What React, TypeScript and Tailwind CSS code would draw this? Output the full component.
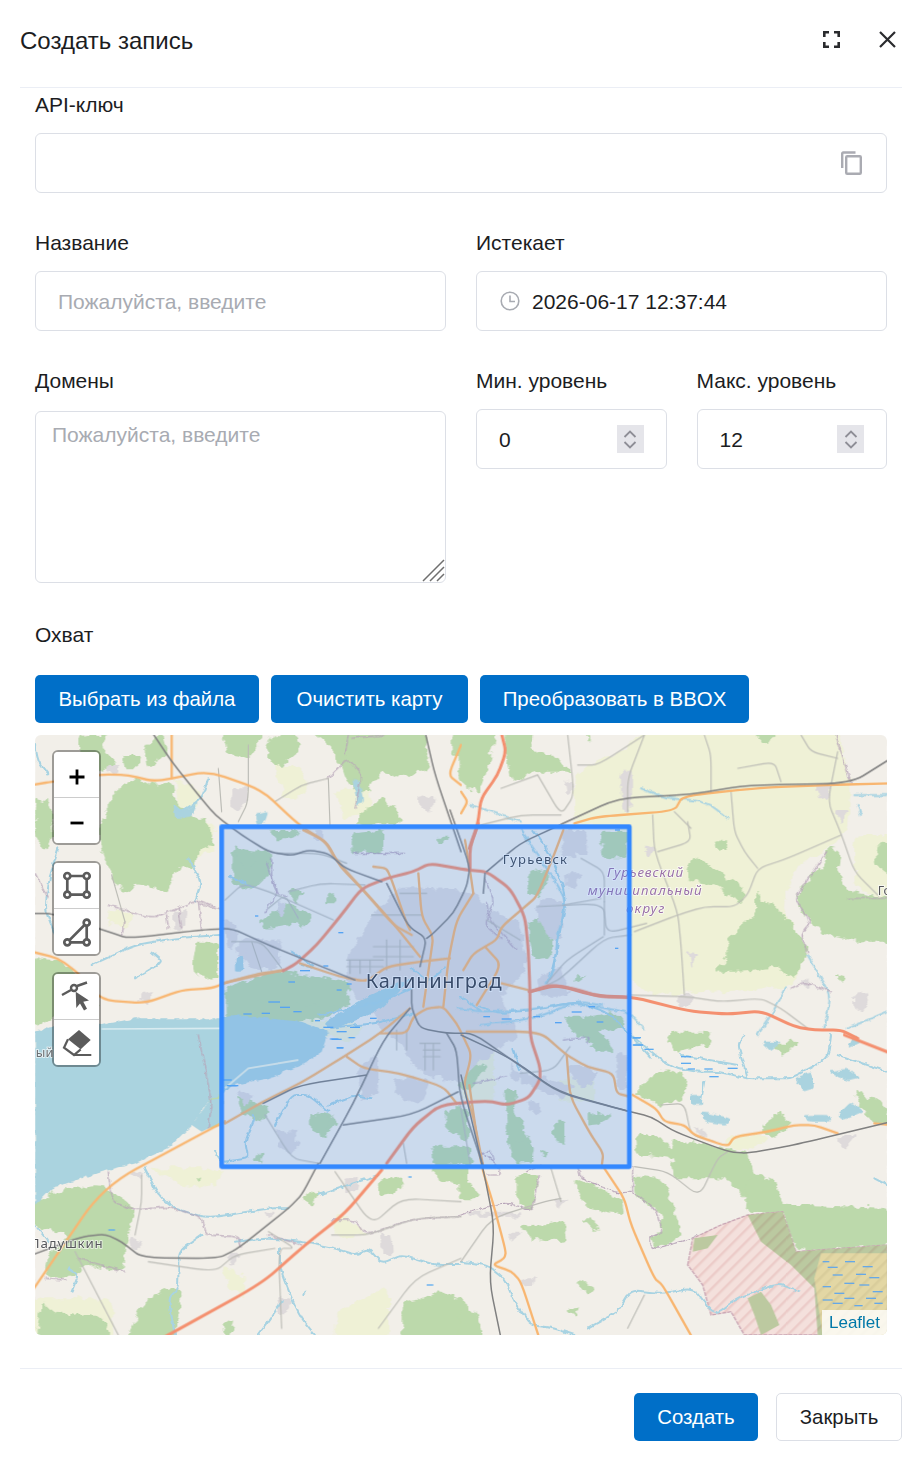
import React from "react";

type Space = {
  t: string;
  light?: string[];
  forest?: string[];
  urban?: string[];
  water?: string[];
  river?: string[];
  minor?: string[];
  boundary?: string[];
  orange?: string[];
  red?: string[];
  rail?: string[];
  dash?: string[];
};

const spaces: Space[] = [
  {
    t: "translate(0,0)",
    light: [
      "420,130 500,170 480,220 430,220",
      "460,270 540,260 540,340 480,370",
      "220,520 300,530 280,580 220,570",
      "900,170 1000,150 1010,240 930,250",
      "720,90 800,90 820,180 750,190",
    ],
    forest: [
      "240,170 300,130 360,150 410,140 420,200 470,240 520,260 545,330 490,345 480,395 430,400 400,470 310,445 280,480 240,440 200,350 190,280",
      "130,0 220,0 200,40 240,90 190,115 130,105",
      "0,190 40,200 60,290 30,350 0,300",
      "820,-20 1165,-20 1190,100 1090,130 1040,110 990,175 930,140 900,50",
      "970,240 1040,190 1090,230 1100,268 970,268",
      "690,20 770,-20 800,40 730,100 700,70",
      "-20,670 80,680 130,720 190,800 150,840 60,850 -20,880",
      "480,620 550,620 550,720 500,730 470,700",
      "330,40 380,-10 400,60 340,100",
      "260,60 320,60 310,100 270,100",
      "560,-10 690,-10 640,70 580,60",
      "1250,-10 1290,-10 1290,60 1250,60",
      "590,340 700,350 710,420 640,470 590,440",
      "950,310 1030,290 1030,350 950,355",
      "575,770 740,720 960,790 880,850 700,870 575,850",
      "780,500 800,560 700,580 660,560",
    ],
    urban: [
      "590,160 650,160 620,230 585,220",
      "220,90 250,90 250,110 220,110",
      "1150,180 1210,190 1180,230 1150,210",
      "415,530 460,530 440,590 415,590",
      "730,500 760,510 740,550 720,530",
      "310,780 360,770 350,800 310,800",
      "620,610 660,640 640,690 600,650",
    ],
    water: [
      "415,210 440,230 490,200 470,245 420,250",
      "955,130 975,140 985,200 965,210",
      "660,240 700,230 690,260 665,270",
      "600,680 625,690 620,710 600,710",
    ],
    river: [
      "0,30 10,80 40,120",
      "70,340 45,420 30,520 60,600",
      "520,130 500,190 440,230 415,210",
      "460,370 500,440 480,500",
      "170,690 300,630 420,610 555,600",
      "350,650 385,680 300,730",
      "770,650 840,700 800,690",
      "1130,700 1180,740 1230,700",
      "850,840 1040,800 1130,760",
    ],
    minor: [
      "550,100 560,230",
      "640,30 640,200 610,260",
      "720,200 800,150 880,130",
      "880,130 885,270",
      "230,420 270,560",
      "650,620 680,710",
      "1010,540 1100,540 1160,540",
      "760,470 860,445 990,450",
      "700,520 750,480 790,550",
      "590,620 680,620 740,700",
    ],
    boundary: [
      "220,510 350,550 430,520 490,495 540,515",
      "880,130 940,70 980,120 960,220",
      "940,0 930,60",
      "490,495 500,590",
      "1050,0 950,10",
      "710,370 710,430 730,470 690,530",
      "0,415 40,490",
      "270,560 260,600",
      "395,540 400,580",
      "430,520 440,580",
    ],
    orange: [
      "-10,150 50,140 200,118 280,120 360,140 520,108 680,165 790,268 870,320 900,370 980,460 1075,570 1130,600",
      "410,0 410,130",
      "1278,30 1240,120 1278,150",
      "-10,650 70,670 130,715 200,795 330,805 440,765 530,760 580,740 745,705",
    ],
    rail: [
      "350,-10 410,80 490,180 540,240 620,300 700,350 770,362 820,345 880,355 930,400 1040,440",
      "-10,535 50,535 220,590 280,610 500,585 590,580 700,630 960,735",
      "1170,-10 1200,120 1278,350",
    ],
  },
  {
    t: "translate(1278,0)",
    light: [
      "340,110 500,40 560,-30 1120,-30 1170,140 1160,300 1000,400 960,520 1040,640 1000,760 500,780 505,280 340,268",
      "1180,300 1300,300 1300,500 1180,460",
    ],
    forest: [
      "-10,-20 110,-20 80,100 50,180 -10,130",
      "130,-20 220,-20 210,40 290,70 340,110 220,110 150,140",
      "860,-20 960,-20 920,30",
      "700,360 770,410 860,470 830,510 780,450 690,440 680,410",
      "880,470 960,530 1030,620 1040,650 1000,740 950,700 850,710 760,710 800,670 800,610 880,540",
      "1100,340 1140,350 1130,400 1160,470 1300,490 1300,620 1200,620 1090,600 1050,560 1000,490 1050,420 1090,390",
      "1245,330 1300,320 1300,430 1245,390",
      "765,315 800,320 795,345 765,345",
      "415,290 500,290 500,370 430,370",
      "200,410 270,400 240,490 200,470",
      "200,550 280,570 230,680",
      "345,720 375,720 340,745",
      "350,850 480,830 490,880 350,890",
      "1115,730 1150,720 1140,745",
      "370,-10 390,-10 385,20",
    ],
    urban: [
      "480,110 510,110 510,230 480,230",
      "545,330 585,340 570,370",
      "650,780 700,780 690,810 650,810",
      "310,130 340,160 320,190",
      "1070,150 1120,155 1100,190 1070,190",
      "1120,225 1160,225 1140,260",
      "680,650 710,660 690,700",
      "1020,740 1060,740 1040,760",
      "1180,780 1230,770 1210,830 1180,820",
      "300,290 345,290 340,370 300,370",
      "235,490 300,500 290,555 230,540",
    ],
    river: [
      "540,160 620,190 700,195 750,210 800,250",
      "180,285 320,495 290,600 280,700 250,745",
      "1180,180 1278,180",
      "-10,820 60,830 200,825 330,805 500,830 550,880",
      "975,760 930,840 890,900",
      "1040,660 1110,780 1090,880",
      "1160,880 1278,830",
      "1190,210 1200,240",
      "30,210 120,240 180,260",
      "60,870 220,850 350,800 420,810",
    ],
    minor: [
      "520,590 650,540 730,515 820,515 860,480 890,400 980,370 1140,300",
      "575,240 580,350 650,530 660,630 670,780",
      "500,780 680,785 780,800 900,790 960,820 1040,880",
      "550,0 500,130 500,230",
      "230,120 300,240 340,180 320,0",
      "1130,50 1100,200 1140,295 1180,410 1250,480",
      "810,170 820,290 850,350 890,400",
      "350,90 410,90 550,0",
      "830,100 940,80 960,140",
      "1020,0 1050,50 1130,70",
      "730,0 750,60 750,170",
      "680,260 690,320 590,350",
      "640,230 690,280",
      "120,160 230,120",
      "60,270 180,240 300,240",
      "510,600 430,610 300,730 260,750",
      "430,500 430,600",
      "310,510 420,490",
      "360,370 430,410 430,500",
    ],
    boundary: [
      "1125,0 1170,145",
      "1100,350 1050,420 1000,490 1050,560 1020,600 1040,650",
      "1160,490 1278,490",
      "990,760 1030,740 1110,770",
      "70,430 100,500 70,570 120,610",
    ],
    orange: [
      "340,265 410,245 640,228 665,183 900,158 1100,150 1290,145",
      "0,170 20,200 0,235",
    ],
    red: [
      "120,-10 135,50 110,120 60,190 50,270 25,340",
      "205,770 290,750 400,782 520,787 680,828 800,838 900,828 1000,875 1060,885 1140,885 1190,910",
    ],
    rail: [
      "300,268 470,190 690,178 860,150 1170,145 1290,70",
    ],
  },
  {
    t: "translate(0,900)",
    light: [
      "340,400 560,400 560,440 460,460",
      "900,530 980,580 1000,600 900,610",
      "900,840 1060,750 1060,920 900,920",
      "-20,790 230,790 240,920 -20,920",
      "560,690 630,720 630,790 580,760",
    ],
    forest: [
      "-20,510 60,470 200,450 300,525 270,640 270,710 150,690 100,730 30,720 40,660 60,640 100,600 -20,570",
      "320,810 400,760 440,770 420,920 270,920",
      "1100,800 1160,790 1220,770 1300,800 1300,920 1100,920",
      "560,860 600,850 580,920",
      "1030,440 1100,420 1100,460 1040,490",
      "20,800 60,840 200,840 230,920 0,920",
      "520,190 560,170 560,280 525,280",
      "820,260 880,230 910,270 860,310",
      "1200,340 1300,330 1300,388 1200,388",
      "1230,220 1300,220 1300,320 1230,280",
      "790,490 850,460 830,510",
      "600,180 690,210 700,260 620,240",
      "1200,380 1300,400 1300,460 1200,430",
      "650,370 690,350 680,390",
      "480,420 500,425 490,440",
    ],
    urban: [
      "1040,600 1065,600 1075,660 1050,660",
      "690,530 725,530 700,555",
      "570,665 620,660 590,695",
      "280,610 330,620 300,650",
      "720,790 770,790 760,835 730,835",
      "930,430 970,430 960,470 930,470",
      "280,410 320,410 310,430",
      "730,290 760,290 740,320",
      "770,280 790,290 770,320",
      "760,320 800,320 770,360",
      "970,100 1030,60 1030,170 980,200",
      "1080,130 1190,130 1160,210 1080,180",
      "600,160 660,180 630,220",
    ],
    river: [
      "330,400 370,480 420,520 520,550 700,520 760,520",
      "850,480 1030,420",
      "500,600 430,650 430,760 400,790 420,900",
      "600,620 700,610 800,620 900,640 960,660 1000,640 1040,685 1100,660 1200,690 1278,690",
      "735,640 735,700 770,790 800,850 840,900",
      "740,800 700,860 670,900",
      "100,700 130,720 110,770",
      "570,380 640,370 630,320 660,250 650,240",
      "720,270 770,180 820,180 880,230",
      "880,210 960,180 1010,190",
      "540,350 560,380",
      "0,570 40,620",
      "810,770 805,780",
    ],
    minor: [
      "320,420 320,500 300,600",
      "120,650 250,900",
      "900,410 1010,570 1100,490 1278,500",
      "700,590 780,640 730,640 740,880",
      "1030,880 1140,730 1278,670",
      "340,680 540,710 600,660 720,640",
      "690,240 770,370 850,385",
      "890,600 1000,600 1140,550 1278,545",
    ],
    boundary: [
      "490,0 530,200 520,280",
      "220,410 230,500 300,525 400,515 500,545 510,600 610,605 620,640",
      "890,555 960,555 990,600 1140,550 1278,545",
      "130,670 270,710",
      "30,730 90,735",
      "700,600 800,630",
    ],
    orange: ["-10,770 205,455 530,280 570,260"],
    red: ["1040,405 930,535 810,630 680,745 400,900 370,915"],
    rail: [
      "850,385 800,480 760,520 610,640 550,670 320,668 260,620 210,597 140,605 -10,660",
      "1270,170 1130,240 925,270",
    ],
    dash: [
      "560,135h30", "575,152h30", "220,585h20", "1175,750h20", "1120,426h10",
      "885,12h25", "940,8h20", "905,38h20",
    ],
  },
  {
    t: "translate(1278,900)",
    light: ["0,0 100,0 100,200 0,200", "300,130 400,130 400,200 300,200", "800,300 920,300 870,350 800,340"],
    forest: [
      "525,300 600,300 630,340 640,315 750,330 870,360 880,420 950,440 850,530 855,490 800,430 640,430 630,370 560,360 530,360",
      "560,130 620,100 680,130 660,200 590,210 520,180",
      "520,420 600,430 640,520 660,610 580,640 565,605 605,595 600,540 520,480",
      "-10,400 60,490 -10,490",
      "170,420 230,420 210,530 170,500",
      "330,420 480,490 490,540 380,520",
      "170,570 310,560 315,620 200,610",
      "340,740 410,750 380,785",
      "320,830 355,815 345,850",
      "-10,830 50,830 65,920 -10,920",
      "610,-10 760,-10 740,30 640,50",
      "900,270 950,230 1000,265 930,310",
      "1170,170 1250,190 1300,260 1230,260",
      "130,165 165,165 160,250 130,215",
      "130,265 180,320 220,330 210,385 160,385",
      "270,260 310,260 310,320 280,300",
      "380,230 430,260 380,270",
      "235,350 260,350 255,370",
      "360,550 400,550 410,600",
      "940,20 1010,20 960,70",
      "850,430 950,440 960,510 1050,510 1300,520 1300,630 1005,650 965,530 860,535",
      "380,30 440,10 460,50 400,50",
      "20,70 60,120 30,165 -10,160",
    ],
    urban: [
      "695,270 735,290 720,305",
      "130,590 180,590 160,625",
      "180,730 230,730 200,755",
      "1125,300 1190,300 1150,345",
      "270,490 320,490 290,525",
      "200,120 350,150 300,190 200,150",
      "320,90 390,90 390,140 330,130",
      "20,530 180,530 180,545 30,545",
      "-10,60 40,40 40,100 -10,90",
      "150,80 180,120 150,140",
    ],
    water: [
      "1000,130 1050,110 1060,160 1030,170",
      "1100,110 1160,100 1200,130 1160,140",
      "1130,240 1170,200 1210,230 1150,255",
      "1030,240 1100,240 1110,260 1040,260",
      "690,180 720,180 725,210 690,210",
      "720,230 810,250 800,270 730,260",
      "1180,0 1200,20 1160,40",
      "900,20 960,20 930,50",
    ],
    river: [
      "510,0 620,90 700,110 780,110 850,130 940,130 990,130 1100,70 1110,0",
      "860,130 830,30 850,0",
      "730,140 720,200",
      "1130,60 1278,110",
      "0,680 80,690 130,730 160,800 210,870 280,880 340,900",
      "380,880 470,830 510,765 600,775 700,760 760,840 830,790 950,745 1015,770",
      "1240,430 1278,450",
      "660,60 830,90",
    ],
    minor: [
      "520,395 620,410 715,485 770,370 800,350",
      "600,210 670,205 690,300 760,320",
      "0,680 90,550 250,500 300,490",
      "550,780 500,880",
      "270,400 300,500",
    ],
    boundary: [
      "350,395 360,430 470,475 515,470 590,530 605,595 565,605 575,645 690,610 710,600",
      "515,395 515,470",
      "0,540 130,500 215,530 235,420",
      "200,410 240,390",
      "75,420 120,420 110,390 60,350",
    ],
    orange: [
      "25,150 60,390 95,500 135,650 130,670 95,690 150,708 180,740 235,910",
      "430,400 490,490 510,570 580,730 605,750 695,910",
      "515,180 585,220 610,260 670,270 700,300 800,335 820,305 920,290 1000,270 1060,270 1130,295",
      "1240,265 1290,270",
    ],
    red: ["1150,0 1290,55"],
    rail: [
      "0,0 150,70 290,170 500,228 570,245 640,290 800,350 860,355 1000,330 1290,260",
      "0,120 65,395 100,570 85,740 120,910",
    ],
    dash: [
      "515,8h25", "515,30h30", "550,43h28", "660,65h30", "660,85h30", "680,102h22", "730,102h25", "800,100h30", "745,125h28",
    ],
  },
  {
    t: "translate(495,225)",
    urban: [
      "440,440 530,300 600,230 820,240 870,300 960,340 980,480 900,560 960,680 830,760 780,820 660,790 600,700 540,650 440,520",
      "1090,60 1160,60 1160,130 1090,130",
      "1000,290 1090,270 1080,390 1040,380",
      "340,60 370,60 370,90 340,90",
      "1010,500 1080,470 1110,560 1020,560",
      "1130,780 1190,780 1170,830 1130,820",
      "1100,190 1140,190 1130,230 1100,230",
      "980,880 1020,880 1010,920",
      "230,960 290,970 280,1030 230,1010",
      "130,380 250,400 230,480 140,470",
      "70,330 120,350 90,430",
      "1250,730 1280,730 1280,840 1250,840",
      "960,780 1020,810 960,830",
    ],
    forest: [
      "460,70 550,60 550,130 460,120",
      "100,100 180,150 130,180",
      "200,60 300,60 280,85 220,85",
      "75,530 240,480 460,520 420,590 200,580 75,580",
      "800,750 860,770 830,810",
      "910,840 950,840 945,900 1000,1010 920,980",
      "1060,935 1090,960 1095,1000 1060,990",
      "330,910 390,920 370,980 330,960",
      "700,260 750,270 700,310",
      "980,330 1060,330 1060,440 1000,450",
      "690,1010 760,1010 830,1060 700,1065",
      "1090,620 1170,620 1240,720 1130,680",
      "1180,910 1240,920 1190,945",
      "260,300 340,310 300,360",
      "390,240 410,280 380,280",
      "260,240 310,240 290,280",
      "710,80 750,80 720,100",
    ],
    light: [
      "260,625 500,640 440,705 380,665",
      "1000,330 1060,330 1030,400",
    ],
    water: [
      "370,640 500,560 640,500 600,540 540,600 400,660",
      "110,440 130,440 130,480 110,480",
    ],
    river: [
      "840,590 900,610 1000,600 1130,575 1230,610 1350,740",
      "1000,60 1050,130 1100,260 1060,470 1040,520",
      "640,610 530,640 420,650",
      "840,600 780,560",
      "940,720 960,780",
      "90,200 160,230",
    ],
    minor: [
      "75,270 130,220 220,250 400,330",
      "560,390 560,480",
      "600,390 600,480",
      "520,410 640,410",
      "520,440 640,440",
      "440,450 550,450",
      "440,470 550,470",
      "450,450 450,490",
      "480,450 480,490",
      "510,450 510,490",
      "590,660 590,720",
      "620,660 620,720",
      "660,700 720,700",
      "670,720 720,720",
      "670,740 720,740",
      "675,700 675,780",
      "700,700 700,780",
      "600,250 680,250",
      "860,330 960,390",
      "1010,290 1210,280 1220,370 1340,340",
      "1210,380 1100,450 1040,520",
      "1110,710 1060,780 960,790",
      "230,130 360,130 440,160",
      "780,880 810,1060",
      "610,1000 620,1060",
    ],
    boundary: [
      "200,160 230,250 260,260",
      "460,130 610,130",
      "860,280 870,330 950,420",
      "1090,690 1170,680 1160,700",
      "820,820 920,800",
      "840,1030 870,1020 880,1050",
      "0,280 60,300",
    ],
    orange: [
      "70,520 180,490 250,482",
      "300,460 420,500 500,515 560,470 660,455 750,445",
      "310,60 380,95 420,170 490,240 580,340 660,440",
      "520,170 560,175 575,210 620,340 630,360",
      "655,190 665,320 700,380 690,450 670,590",
      "820,250 770,330 745,450 730,590",
      "1090,60 1060,140 1010,260 975,290 905,350 890,390 820,430 790,480",
      "855,410 905,465 830,585",
      "905,520 985,540",
      "540,670 620,670 640,620 680,595 730,590 770,640 790,680 815,735 790,830 820,920 850,1070",
      "75,940 180,880 300,820 440,735 540,670 630,595",
      "440,740 490,775 600,790 730,830 770,880",
      "800,665 1020,665 1100,735 1160,770 1240,790 1250,850 1290,860",
      "1100,735 1110,860 1170,970 1210,1030 1205,1070",
      "795,90 810,180 820,250",
    ],
    red: [
      "250,482 290,460 350,405 420,320 485,235 560,205 640,185 690,160 800,180 860,185 930,235 975,320 985,420 990,545 990,680 1020,770 1020,810 985,865 920,885 860,872 720,885 640,950 560,1060",
      "990,545 1050,525 1120,535 1200,560 1290,562",
      "810,180 810,110 835,40",
    ],
    rail: [
      "560,220 625,350 680,385 660,470",
      "750,0 810,170 800,230 760,310 700,370 680,385",
      "860,185 960,100 1080,45",
      "635,540 635,595 660,655 740,670 820,670 950,760 1080,850 1290,905",
      "630,595 550,690 460,880 360,1060",
      "740,670 770,720 780,860 850,1070",
      "500,795 300,825 190,880",
      "855,190 850,250",
    ],
    dash: [
      "415,368h15", "370,468h15", "300,482h30", "265,516h20", "410,540h15", "440,522h15", "205,576h35", "240,592h30",
      "130,612h25", "185,610h25", "280,605h25", "345,632h15", "370,652h30", "410,665h30", "450,652h30", "510,625h20",
      "395,688h30", "410,714h20", "850,620h20", "905,627h30", "1000,620h20", "1065,638h20", "1115,606h30", "1190,636h20",
      "1165,590h20", "1300,684h20", "1300,705h30", "85,827h30", "1245,415h10", "165,318h10", "1245,60h15",
    ],
  },
];

function parse(p: string) {
  return p.split(" ").map((q) => q.split(",").map(Number));
}

// closed outline with rounded corners; the sides stay where they are
function blob(p: string) {
  const a = parse(p);
  const n = a.length;
  const share = 0.22;
  let d = "";
  a.forEach((pt, i) => {
    const prev = a[(i + n - 1) % n];
    const next = a[(i + 1) % n];
    const sx = pt[0] + (prev[0] - pt[0]) * share;
    const sy = pt[1] + (prev[1] - pt[1]) * share;
    const ex = pt[0] + (next[0] - pt[0]) * share;
    const ey = pt[1] + (next[1] - pt[1]) * share;
    d += `${i === 0 ? "M" : "L"}${sx},${sy}Q${pt[0]},${pt[1]} ${ex},${ey}`;
  });
  return d + "Z";
}

// open line rounded at its corners, the ends stay in place
function curve(p: string) {
  const a = parse(p);
  if (a.length < 3) return `M${a[0]}L${a[a.length - 1]}`;
  let d = `M${a[0][0]},${a[0][1]}`;
  const share = 0.3;
  for (let i = 1; i < a.length - 1; i++) {
    const [x0, y0] = a[i - 1];
    const [x, y] = a[i];
    const [x2, y2] = a[i + 1];
    d += `L${x + (x0 - x) * share},${y + (y0 - y) * share}`;
    d += `Q${x},${y} ${x + (x2 - x) * share},${y + (y2 - y) * share}`;
  }
  const e = a[a.length - 1];
  return d + `L${e[0]},${e[1]}`;
}

function Poly({ pts, fill }: { pts: string[] | undefined; fill: string }) {
  return (
    <>
      {(pts ?? []).map((p, i) => (
        <path key={i} d={blob(p)} fill={fill} />
      ))}
    </>
  );
}

function Lines({ pts, stroke, w, dash }: { pts: string[] | undefined; stroke: string; w: number; dash?: string }) {
  return (
    <>
      {(pts ?? []).map((p, i) => (
        <path
          key={i}
          d={curve(p)}
          fill="none"
          stroke={stroke}
          strokeWidth={w}
          strokeLinejoin="round"
          strokeLinecap="round"
          strokeDasharray={dash}
        />
      ))}
    </>
  );
}

function Layer({ render }: { render: (s: Space) => React.ReactNode }) {
  return (
    <>
      {spaces.map((s, i) => (
        <g key={i} transform={s.t}>
          {render(s)}
        </g>
      ))}
    </>
  );
}

const haloText = {
  paintOrder: "stroke",
} as React.CSSProperties;

function MapPicture() {
  return (
    <svg viewBox="0 0 2556 1800" className="block h-full w-full">
      <defs>
        <filter id="tile" x="0" y="0" width="100%" height="100%">
          <feGaussianBlur stdDeviation="1.6" />
        </filter>
        <filter id="rough" x="-5%" y="-5%" width="110%" height="110%" filterUnits="objectBoundingBox">
          <feTurbulence type="fractalNoise" baseFrequency="0.035" numOctaves="3" seed="4" result="n" />
          <feDisplacementMap in="SourceGraphic" in2="n" scale="30" xChannelSelector="R" yChannelSelector="G" />
        </filter>
        <filter id="wiggle" x="-5%" y="-5%" width="110%" height="110%">
          <feTurbulence type="fractalNoise" baseFrequency="0.05" numOctaves="2" seed="9" result="n" />
          <feDisplacementMap in="SourceGraphic" in2="n" scale="14" xChannelSelector="G" yChannelSelector="R" />
        </filter>
        <pattern id="hatchPink" width="26" height="26" patternUnits="userSpaceOnUse" patternTransform="rotate(-45)">
          <rect width="26" height="26" fill="#f4e0dc" />
          <rect width="26" height="7" fill="#eccbc8" />
        </pattern>
        <pattern id="hatchGreen" width="26" height="26" patternUnits="userSpaceOnUse" patternTransform="rotate(-45)">
          <rect width="26" height="26" fill="#bbc9a0" />
          <rect width="26" height="7" fill="#b6b795" />
        </pattern>
        <pattern id="hatchMarsh" width="26" height="26" patternUnits="userSpaceOnUse" patternTransform="rotate(-45)">
          <rect width="26" height="26" fill="#e3d7a4" />
          <rect width="26" height="7" fill="#d9cd9b" />
        </pattern>
      </defs>
      <g filter="url(#tile)">
        <rect width="2556" height="1800" fill="#f2efe9" />
        <g filter="url(#rough)">
          <rect width="2556" height="1800" fill="#f2efe9" />
          <Layer render={(s) => <Poly pts={s.light} fill="#eff1d6" />} />
          <Layer render={(s) => <Poly pts={s.forest} fill="#bcd9ab" />} />
          <Layer render={(s) => <Poly pts={s.urban} fill="#dedadb" />} />
        </g>
        {/* restricted area with hatching */}
        <g transform="translate(1278,900)">
          <polygon
            points="680,690 695,610 780,570 860,540 965,530 1005,650 1278,630 1278,900 850,900 810,830 750,840 725,750"
            fill="url(#hatchPink)"
            stroke="#c9a5b4"
            strokeWidth="4"
            strokeDasharray="12 3"
          />
          <polygon points="860,540 965,530 1005,650 1278,630 1278,900 1070,900 1060,760 990,690 900,620" fill="url(#hatchGreen)" />
          <polygon points="1080,655 1278,655 1278,900 1085,900 1060,730" fill="url(#hatchMarsh)" />
          <polygon points="700,610 770,600 740,640 695,650" fill="#bcc9a0" />
          <polygon points="860,790 900,770 930,810 955,870 900,900 880,840" fill="#bcc9a0" />
        </g>
        {/* the sea and the lagoon */}
        <polygon
          points="0,1410 50,1360 200,1310 300,1285 400,1240 470,1170 520,1100 600,1050 700,1030 800,990 860,950 880,890 800,860 700,850 600,840 560,850 400,850 300,850 200,870 100,860 0,890"
          fill="#aad3df"
          filter="url(#wiggle)"
        />
        <polyline points="200,882 560,880" fill="none" stroke="#d8ebf0" strokeWidth="5" />
        <polyline points="570,1060 640,1000 790,975" fill="none" stroke="#eaf1e4" strokeWidth="6" />
        <polygon points="470,1170 525,1095 560,1090 560,1160 500,1190" fill="#aad3df" />
        <g filter="url(#wiggle)">
          <Layer render={(s) => <Poly pts={s.water} fill="#aad3df" />} />
          <Layer render={(s) => <Lines pts={s.river} stroke="#a8d3e2" w={6} />} />
          <Layer render={(s) => <Lines pts={s.boundary} stroke="#b7a4b8" w={3.5} dash="14 4" />} />
        </g>
        <Layer render={(s) => <Lines pts={s.minor} stroke="#bcbcb6" w={3.5} />} />
        <Layer render={(s) => <Lines pts={s.orange} stroke="#f8b671" w={7} />} />
        <Layer render={(s) => <Lines pts={s.red} stroke="#f4906f" w={9} />} />
        <Layer render={(s) => <Lines pts={s.rail} stroke="#808080" w={4.5} />} />
        <g transform="translate(1278,900)">
          {[
            "1085,680h20", "1152,680h30", "1205,695h30", "1100,697h30", "1115,720h30", "1185,718h30", "1085,755h25",
            "1150,745h30", "1225,728h30", "1195,750h30", "1120,775h30", "1235,770h30", "1085,795h30", "1150,790h30", "1215,790h30",
            "1115,805h30", "1180,812h25", "1240,805h25",
          ].map((d, i) => (
            <path key={i} d={`M${d}`} stroke="#66a8e6" strokeWidth="4" fill="none" />
          ))}
        </g>
        <Layer
          render={(s) =>
            (s.dash ?? []).map((d, i) => <path key={i} d={`M${d}`} stroke="#5dabf0" strokeWidth="4" fill="none" />)
          }
        />
        <g fontFamily="'Noto Sans', 'Open Sans', sans-serif" stroke="#ffffff" strokeOpacity="0.75" strokeWidth="5" style={haloText}>
          <text x="992" y="760" fontSize="60" fill="#3a3d44" textLength="408">
            Калининград
          </text>
          <text x="1403" y="387" fontSize="39" fill="#3f444c" textLength="193">
            Гурьевск
          </text>
          <text x="-14" y="1540" fontSize="40" fill="#55565a" textLength="217">
            Ладушкин
          </text>
          <text x="55" y="965" fontSize="38" fill="#6b6f72" textAnchor="end">
            ый
          </text>
          <text x="2528" y="480" fontSize="38" fill="#55565a">
            Го
          </text>
          <g fontStyle="italic" fill="#9a72a8" fontSize="40">
            <text x="1716" y="425" textLength="228">
              Гурьевский
            </text>
            <text x="1658" y="480" textLength="342">
              муниципальный
            </text>
            <text x="1773" y="535" textLength="115">
              округ
            </text>
          </g>
        </g>
      </g>
      <rect x="560" y="275" width="1223" height="1020" fill="#3388ff" fillOpacity="0.2" stroke="#3388ff" strokeWidth="14" strokeLinejoin="round" />
    </svg>
  );
}

function Label({ children }: { children: React.ReactNode }) {
  return <div className="mb-4 h-6 text-[21px] leading-6 text-[#1c1d1f]">{children}</div>;
}

function Spinner() {
  return (
    <span className="flex h-[28px] w-[27px] flex-col items-center justify-center gap-[3px] bg-[#e5e5ea]">
      <svg width="14" height="8" viewBox="0 0 14 8" fill="none" stroke="#8e8e96" strokeWidth="1.8">
        <path d="M1.5 7 7 1.5 12.5 7" />
      </svg>
      <svg width="14" height="8" viewBox="0 0 14 8" fill="none" stroke="#8e8e96" strokeWidth="1.8">
        <path d="M1.5 1 7 6.5 12.5 1" />
      </svg>
    </span>
  );
}

function NumberBox({ label, value }: { label: string; value: string }) {
  return (
    <div>
      <Label>{label}</Label>
      <div className="flex h-[60px] items-center justify-between rounded-[6px] border border-[#dcdfe6] pl-[22px] pr-[22px] text-[21px] text-[#1c1d1f]">
        <span className="pt-[1px]">{value}</span>
        <Spinner />
      </div>
    </div>
  );
}

function ToolBar({ children }: { children: React.ReactNode }) {
  return (
    <div className="flex w-[49px] flex-col overflow-hidden rounded-[6px] border-2 border-[#00000059] bg-clip-padding">
      {children}
    </div>
  );
}

function ToolButton({ children, last }: { children: React.ReactNode; last?: boolean }) {
  return (
    <div className={last ? "flex h-[45px] items-center justify-center bg-white" : "flex h-[46px] items-center justify-center border-b border-[#cccccc] bg-white"}>
      {children}
    </div>
  );
}

const iconStroke = "#5b5b5b";

function BlueButton({ children, className }: { children: React.ReactNode; className: string }) {
  return (
    <button className={`flex h-12 items-center justify-center rounded-[5px] bg-[#006fc8] text-[20.4px] text-white ${className}`}>
      {children}
    </button>
  );
}

export default function App() {
  return (
    <div className="h-[1462px] w-[920px] overflow-hidden bg-white font-['Liberation_Sans',Arial,sans-serif] text-[#1c1d1f]">
      <header className="ml-5 mr-[18px] flex h-[88px] items-center justify-between border-b border-[#ebeef5] pb-[6px]">
        <h1 className="text-[24px] font-normal leading-7 text-[#1c1d1f]">Создать запись</h1>
        <div className="mb-[2px] flex items-center gap-[39px] pr-[6px]">
          <svg width="17" height="17" viewBox="0 0 17 17" fill="none" stroke="#2a2b2e" strokeWidth="2.6">
            <path d="M1.3 6V1.3H6M11 1.3h4.7V6M15.7 11v4.7H11M6 15.7H1.3V11" />
          </svg>
          <svg width="17" height="17" viewBox="0 0 17 17" fill="none" stroke="#2a2b2e" strokeWidth="2.2">
            <path d="M1 1 16 16M16 1 1 16" />
          </svg>
        </div>
      </header>

      <main className="w-[887px] pl-[35px] pt-[5px]">
        <Label>API-ключ</Label>
        <div className="flex h-[60px] items-center justify-end rounded-[6px] border border-[#dcdfe6] pr-[24px]">
          <svg width="21" height="24" viewBox="0 0 21 24" fill="none" stroke="#aaabb2" strokeWidth="2.4">
            <path d="M14.5 1.5H2.2a1 1 0 0 0-1 1V17" />
            <rect x="5.2" y="5.2" width="14.6" height="17.6" rx="1" />
          </svg>
        </div>

        <div className="mt-[38px] grid grid-cols-2 gap-x-[30px]">
          <div>
            <Label>Название</Label>
            <input
              placeholder="Пожалуйста, введите"
              className="h-[60px] w-full rounded-[6px] border border-[#dcdfe6] pl-[22px] pt-[2px] text-[21px] outline-none placeholder:text-[#a8abb2]"
            />
          </div>
          <div>
            <Label>Истекает</Label>
            <div className="flex h-[60px] items-center gap-[12px] rounded-[6px] border border-[#dcdfe6] pl-[23px] text-[21px] text-[#1c1d1f]">
              <svg width="20" height="20" viewBox="0 0 20 20" fill="none" stroke="#a8abb2" strokeWidth="1.6">
                <circle cx="10" cy="10" r="8.8" />
                <path d="M10 4.5V10.5H15" />
              </svg>
              <span className="pt-[1px]">2026-06-17 12:37:44</span>
            </div>
          </div>
        </div>

        <div className="mt-[38px] grid grid-cols-2 gap-x-[30px]">
          <div>
            <Label>Домены</Label>
            <div className="relative pt-[2px]">
              <textarea
                placeholder="Пожалуйста, введите"
                className="block h-[172px] w-full resize-none rounded-[6px] border border-[#dcdfe6] px-4 py-[11px] text-[21px] leading-[24px] outline-none placeholder:text-[#a8abb2]"
              />
              <svg width="24" height="24" viewBox="0 0 24 24" className="absolute bottom-0 right-0" stroke="#6f6f6f" strokeWidth="1.5">
                <path d="M1 22 22 1M8 22 22 8M15 22 22 15" />
              </svg>
            </div>
          </div>
          <div className="grid grid-cols-2 gap-x-[30px] self-start">
            <NumberBox label="Мин. уровень" value="0" />
            <NumberBox label="Макс. уровень" value="12" />
          </div>
        </div>

        <div className="mt-[40px] h-6 text-[21px] leading-6 text-[#1c1d1f]">Охват</div>

        <div className="mt-[28px] flex gap-3">
          <BlueButton className="w-[224px]">Выбрать из файла</BlueButton>
          <BlueButton className="w-[197px]">Очистить карту</BlueButton>
          <BlueButton className="w-[269px]">Преобразовать в BBOX</BlueButton>
        </div>

        <div className="relative mt-3 h-[600px] w-[852px] overflow-hidden rounded-[6px]">
          <MapPicture />
          <div className="absolute left-[17px] top-[15px] flex flex-col gap-[16px]">
            <ToolBar>
              <ToolButton>
                <svg width="18" height="18" viewBox="0 0 18 18" fill="#000000" className="mt-[5px]">
                  <path d="M7.6 1.5h2.8v6.1h6.1v2.8h-6.1v6.1H7.6v-6.1H1.5V7.6h6.1z" />
                </svg>
              </ToolButton>
              <ToolButton last>
                <svg width="18" height="18" viewBox="0 0 18 18" fill="#000000" className="mt-[4px]">
                  <rect x="2.5" y="7.6" width="13" height="2.8" />
                </svg>
              </ToolButton>
            </ToolBar>
            <ToolBar>
              <ToolButton>
                <svg width="45" height="44" viewBox="0 0 45 44" fill="#ffffff" stroke={iconStroke} strokeWidth="2.7">
                  <path d="M13.3 12H32.7V30.7H13.3Z" fill="none" />
                  <circle cx="13.3" cy="12" r="3" />
                  <circle cx="32.7" cy="12" r="3" />
                  <circle cx="13.3" cy="30.7" r="3" />
                  <circle cx="32.7" cy="30.7" r="3" />
                </svg>
              </ToolButton>
              <ToolButton last>
                <svg width="45" height="44" viewBox="0 0 45 44" fill="#ffffff" stroke={iconStroke} strokeWidth="2.7">
                  <path d="M32.7 12.7V32.3H13.3Z" fill="none" />
                  <circle cx="32.7" cy="12.7" r="3" />
                  <circle cx="13.3" cy="32.3" r="3" />
                  <circle cx="32.7" cy="32.3" r="3" />
                </svg>
              </ToolButton>
            </ToolBar>
            <ToolBar>
              <ToolButton>
                <svg width="45" height="44" viewBox="0 0 45 44" fill="none" stroke={iconStroke} strokeWidth="2.4">
                  <path d="M8 20 17 15M23 11 33 7.5" />
                  <circle cx="20" cy="13" r="3" />
                  <path
                    d="M21.7 16.7 22.3 33 26 28.5 30 35.5 33 33.8 29.3 26.8 35 25.5Z"
                    fill={iconStroke}
                    stroke="none"
                  />
                </svg>
              </ToolButton>
              <ToolButton last>
                <svg width="45" height="44" viewBox="0 0 45 44" fill="none" stroke={iconStroke} strokeWidth="2.2">
                  <path d="M25 9 36.7 19 26.7 28.3 14 18.3Z" fill={iconStroke} stroke="none" />
                  <path d="M14 18.3 10 26.7 20 34 26.7 28.3" />
                  <path d="M20 34H37.3" />
                </svg>
              </ToolButton>
            </ToolBar>
          </div>
          <div className="absolute bottom-0 right-0 flex h-[25px] w-[65px] items-center justify-center bg-[#ffffffcc] text-[17px] text-[#0078a8]">
            Leaflet
          </div>
        </div>
      </main>

      <footer className="ml-5 mr-[18px] mt-[33px] flex justify-end gap-[18px] border-t border-[#ebeef5] pt-[24px]">
        <button className="flex h-12 w-[124px] items-center justify-center rounded-[5px] bg-[#006fc8] text-[20.4px] text-white">
          Создать
        </button>
        <button className="flex h-12 w-[126px] items-center justify-center rounded-[5px] border border-[#dcdfe6] bg-white text-[20.4px] text-[#1c1d1f]">
          Закрыть
        </button>
      </footer>
    </div>
  );
}
